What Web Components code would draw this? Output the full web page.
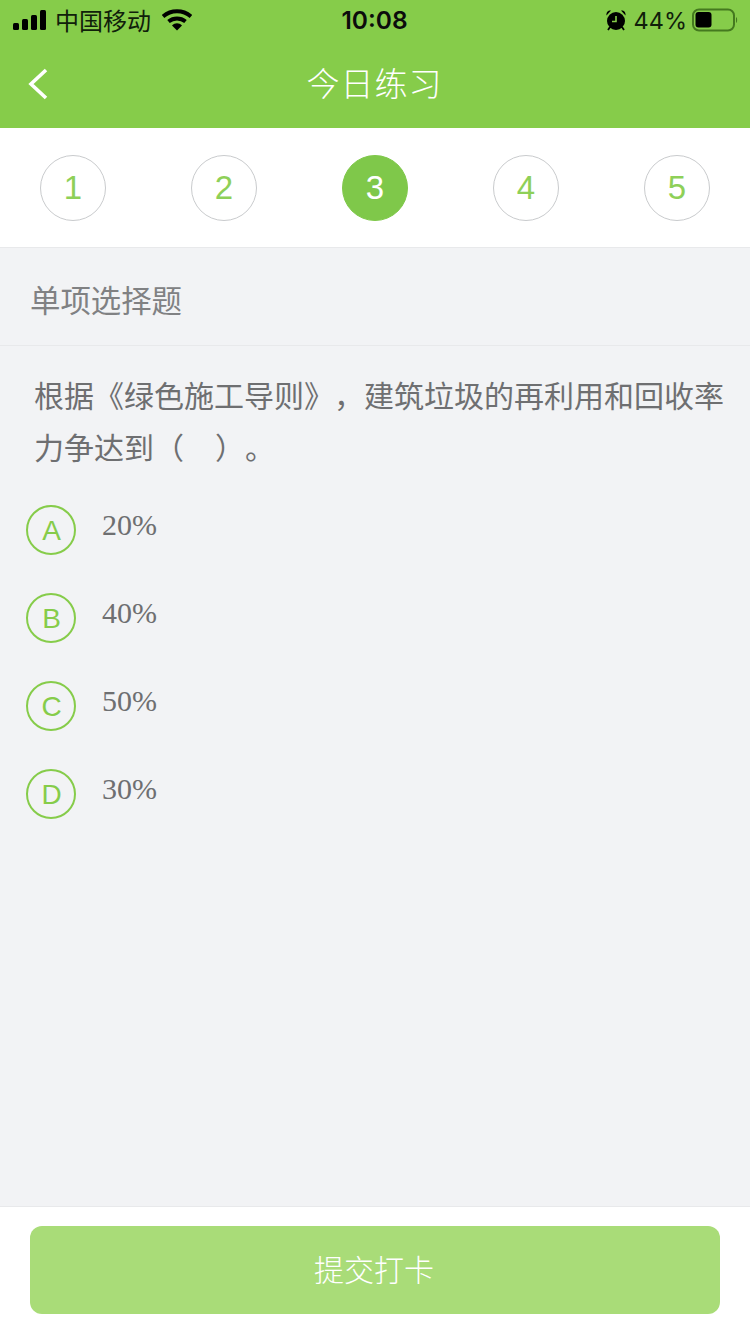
<!DOCTYPE html>
<html lang="zh">
<head>
<meta charset="utf-8">
<title>今日练习</title>
<style>
	html, body { margin: 0; padding: 0; height: 100%; }
	body { font-family: "Noto Sans CJK SC", "Liberation Sans", sans-serif; background: #f2f3f5; overflow: hidden; }
	practice-page { height: 1334px; }
</style>
</head>
<body>
<practice-page>
	<status-bar slot="top"></status-bar>
	<nav-bar slot="top">今日练习</nav-bar>
	<step-bar slot="top" current="3" total="5"></step-bar>
	<section-title>单项选择题</section-title>
	<question-text>根据《绿色施工导则》，建筑垃圾的再利用和回收率力争达到（&nbsp;&nbsp;&nbsp;&nbsp;）。</question-text>
	<answer-option letter="A">20%</answer-option>
	<answer-option letter="B">40%</answer-option>
	<answer-option letter="C">50%</answer-option>
	<answer-option letter="D">30%</answer-option>
	<submit-bar slot="bottom">提交打卡</submit-bar>
</practice-page>

<script>
class PracticePage extends HTMLElement {
	constructor() {
		super();
		this.attachShadow({ mode: 'open' });
	};

	connectedCallback() {
		this.shadowRoot.innerHTML = `<style>
				:host { display: flex; flex-direction: column; width: 750px; }
				main { flex: 1; display: flex; flex-direction: column; min-height: 0; }
			</style>
			<slot name="top"></slot>
			<main><slot></slot></main>
			<slot name="bottom"></slot>`;
	};
};

class StatusBar extends HTMLElement {
	constructor() {
		super();
		this.attachShadow({ mode: 'open' });
	};

	connectedCallback() {
		this.shadowRoot.innerHTML = `<style>
				:host { display: flex; align-items: center; justify-content: space-between; height: 40px; padding: 0 12px 0 13px; background: #86cc4a; color: #10200a; font-family: "Inter", "Liberation Sans", "Noto Sans CJK SC", sans-serif; }
				.side { display: flex; align-items: center; width: 240px; }
				.right { justify-content: flex-end; }
				.carrier { font-size: 24px; line-height: 40px; margin-left: 9px; margin-right: 11px; font-family: "Noto Sans CJK SC", sans-serif; }
				.time { font-size: 24.500px; font-weight: 600; color: #0c0c0c; margin-left: -2px; }
				.pct { font-size: 23.500px; margin-left: 7px; margin-right: 6px; }
				svg { display: block; }
			</style>
			<div class="side">
				<svg width="33" height="20" viewBox="0 0 33 20"><rect x="0" y="13" width="6" height="7" rx="1.5"/><rect x="9" y="9" width="6" height="11" rx="1.5"/><rect x="18" y="5" width="6" height="15" rx="1.5"/><rect x="27" y="0" width="6" height="20" rx="1.5"/></svg>
				<span class="carrier">中国移动</span>
				<svg width="30" height="22" viewBox="0 0 30 22"><path d="M1 7.500C9 .5 21 .5 29 7.500" fill="none" stroke="#000" stroke-width="4"/><path d="M6.500 12.500C11.500 8.500 18.500 8.500 23.500 12.500" fill="none" stroke="#000" stroke-width="4"/><path d="M10 16.500C13 13.500 17 13.500 20 16.500L15 21.500Z"/></svg>
			</div>
			<span class="time">10:08</span>
			<div class="side right">
				<svg width="22" height="22" viewBox="0 0 22 22"><circle cx="11" cy="12" r="9"/><path d="M1.500 6.500C1 3 3.500 1 6 1.500ZM20.500 6.500C21 3 18.500 1 16 1.500Z"/><path d="M11 7v5.500H7" fill="none" stroke="#86cc4a" stroke-width="1.600"/><path d="M5 18l-2 3M17 18l2 3" stroke="#000" stroke-width="1.800"/></svg>
				<span class="pct">44%</span>
				<svg width="46" height="24" viewBox="0 0 46 24" style="margin-left:-1px"><rect x="1" y="1.500" width="41" height="21" rx="6" fill="none" stroke="#44791f" stroke-width="2"/><rect x="3.500" y="4" width="16" height="15.500" rx="3"/><path d="M44 9c1.500.5 1.500 5.500 0 6z" fill="#44791f"/></svg>
			</div>`;
	};
};

class NavBar extends HTMLElement {
	constructor() {
		super();
		this.attachShadow({ mode: 'open' });
	};

	connectedCallback() {
		this.shadowRoot.innerHTML = `<style>
				:host { display: flex; align-items: center; justify-content: center; position: relative; height: 88px; background: #86cc4a; color: #fff; font-size: 33px; letter-spacing: 1px; font-weight: 300; font-family: "Noto Sans CJK SC", sans-serif; }
				.title { margin-top: -4px; margin-left: -1px; }
				svg { position: absolute; left: 27px; top: 27px; }
			</style>
			<svg width="22" height="34" viewBox="0 0 22 34"><path d="M19 3L4 17l15 14" fill="none" stroke="#fff" stroke-width="3.600"/></svg>
			<span class="title"><slot></slot></span>`;
	};
};

class StepBar extends HTMLElement {
	constructor() {
		super();
		this.attachShadow({ mode: 'open' });
	};

	connectedCallback() {
		const total = parseInt(this.getAttribute('total'));
		const current = parseInt(this.getAttribute('current'));
		let items = '';
		for (let i = 1; i <= total; i++) {
			items += `<span class="step ${i === current ? 'on' : ''}">${i}</span>`;
		};
		this.shadowRoot.innerHTML = `<style>
				:host { display: flex; box-sizing: border-box; justify-content: space-between; align-items: flex-start; height: 120px; padding: 27px 40px 0; background: #fff; border-bottom: 1px solid #e8e9eb; }
				.step { box-sizing: border-box; display: flex; align-items: center; justify-content: center; width: 66px; height: 66px; border: 1px solid #c9cbcd; border-radius: 50%; color: #8ed058; font: 33px "Liberation Sans", sans-serif; }
				.on { background: #7fc84a; border-color: #7fc84a; color: #fff; }
			</style>${items}`;
	};
};

class SectionTitle extends HTMLElement {
	constructor() {
		super();
		this.attachShadow({ mode: 'open' });
	};

	connectedCallback() {
		this.shadowRoot.innerHTML = `<style>
				:host { display: block; height: 98px; line-height: 102px; padding-left: 30px; box-sizing: border-box; border-bottom: 1px solid #e8e9eb; color: #808183; font-size: 30.400px; font-family: "Noto Sans CJK SC", sans-serif; }
			</style><slot></slot>`;
	};
};

class QuestionText extends HTMLElement {
	constructor() {
		super();
		this.attachShadow({ mode: 'open' });
	};

	connectedCallback() {
		this.shadowRoot.innerHTML = `<style>
				:host { display: block; padding: 22px 20px 29px 34px; color: #6e6f71; font-size: 30px; line-height: 52px; word-spacing: 1px; font-family: "Noto Sans CJK SC", sans-serif; text-spacing-trim: space-all; font-feature-settings: "chws" 0, "palt" 0; }
			</style><slot></slot>`;
	};
};

class AnswerOption extends HTMLElement {
	constructor() {
		super();
		this.attachShadow({ mode: 'open' });
	};

	connectedCallback() {
		this.shadowRoot.innerHTML = `<style>
				:host { display: flex; align-items: flex-start; height: 88px; padding-left: 26px; }
				.badge { box-sizing: border-box; display: flex; align-items: center; justify-content: center; width: 50px; height: 50px; margin-top: 4px; border: 2px solid #86cc4a; border-radius: 50%; color: #86cc4a; font: 28px "Liberation Sans", sans-serif; padding: 2px 0 0 1px; }
				.text { margin: 6px 0 0 26px; color: #6e6f71; font: 30px/36px "Liberation Serif", serif; }
			</style>
			<span class="badge">${this.getAttribute('letter')}</span>
			<span class="text"><slot></slot></span>`;
	};
};

class SubmitBar extends HTMLElement {
	constructor() {
		super();
		this.attachShadow({ mode: 'open' });
	};

	connectedCallback() {
		this.shadowRoot.innerHTML = `<style>
				:host { display: block; box-sizing: border-box; height: 128px; padding: 19px 30px 0; background: #fff; border-top: 1px solid #e8e9eb; }
				.btn { display: flex; align-items: center; justify-content: center; height: 88px; padding: 0 2px 4px 0; box-sizing: border-box; border-radius: 12px; background: #a9dc78; color: #fff; font-size: 30px; font-weight: 300; font-family: "Noto Sans CJK SC", sans-serif; }
			</style><div class="btn"><slot></slot></div>`;
	};
};

customElements.define('practice-page', PracticePage);
customElements.define('status-bar', StatusBar);
customElements.define('nav-bar', NavBar);
customElements.define('step-bar', StepBar);
customElements.define('section-title', SectionTitle);
customElements.define('question-text', QuestionText);
customElements.define('answer-option', AnswerOption);
customElements.define('submit-bar', SubmitBar);
</script>
</body>
</html>
